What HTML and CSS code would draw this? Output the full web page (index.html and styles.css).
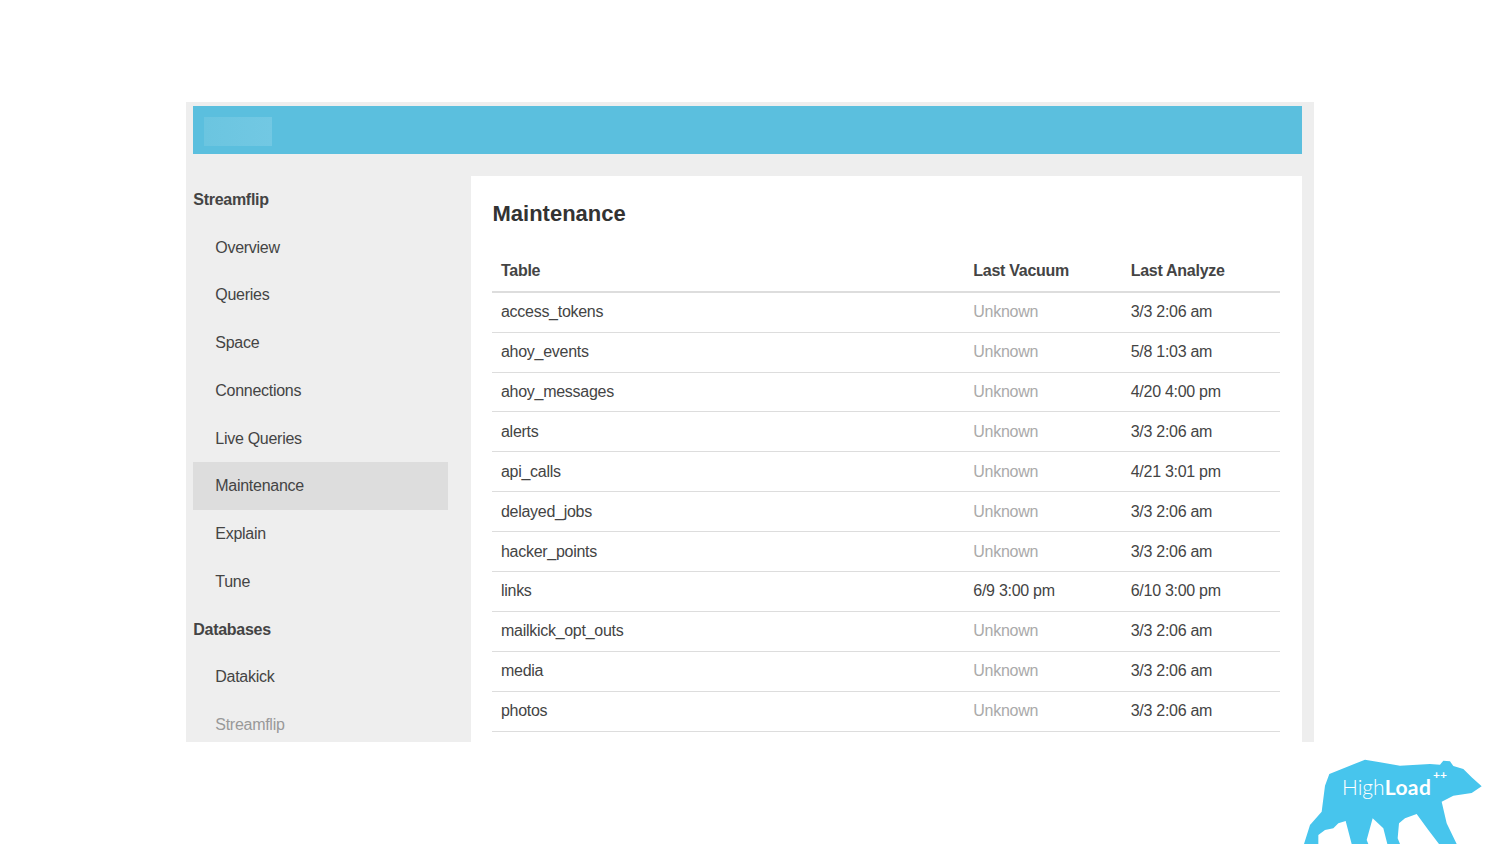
FILE: index.html
```html
<!DOCTYPE html>
<html lang="en">
<head>
<meta charset="utf-8">
<title>Maintenance</title>
<link rel="stylesheet" href="styles.css">
</head>
<body>
<div class="frame">
  <header class="topbar"><div class="brand"></div></header>
  <div class="layout">
    <nav class="sidebar">
      <div class="nav-title">Streamflip</div>
      <a class="nav-item">Overview</a>
      <a class="nav-item">Queries</a>
      <a class="nav-item">Space</a>
      <a class="nav-item">Connections</a>
      <a class="nav-item">Live Queries</a>
      <a class="nav-item active">Maintenance</a>
      <a class="nav-item">Explain</a>
      <a class="nav-item">Tune</a>
      <div class="nav-title">Databases</div>
      <a class="nav-item">Datakick</a>
      <a class="nav-item muted">Streamflip</a>
    </nav>
    <main class="content">
      <h1 class="page-title">Maintenance</h1>
      <table class="data">
        <thead>
          <tr><th class="c1">Table</th><th class="c2">Last Vacuum</th><th class="c2">Last Analyze</th></tr>
        </thead>
        <tbody>
          <tr><td>access_tokens</td><td class="muted">Unknown</td><td>3/3 2:06 am</td></tr>
          <tr><td>ahoy_events</td><td class="muted">Unknown</td><td>5/8 1:03 am</td></tr>
          <tr><td>ahoy_messages</td><td class="muted">Unknown</td><td>4/20 4:00 pm</td></tr>
          <tr><td>alerts</td><td class="muted">Unknown</td><td>3/3 2:06 am</td></tr>
          <tr><td>api_calls</td><td class="muted">Unknown</td><td>4/21 3:01 pm</td></tr>
          <tr><td>delayed_jobs</td><td class="muted">Unknown</td><td>3/3 2:06 am</td></tr>
          <tr><td>hacker_points</td><td class="muted">Unknown</td><td>3/3 2:06 am</td></tr>
          <tr><td>links</td><td>6/9 3:00 pm</td><td>6/10 3:00 pm</td></tr>
          <tr><td>mailkick_opt_outs</td><td class="muted">Unknown</td><td>3/3 2:06 am</td></tr>
          <tr><td>media</td><td class="muted">Unknown</td><td>3/3 2:06 am</td></tr>
          <tr><td>photos</td><td class="muted">Unknown</td><td>3/3 2:06 am</td></tr>
        </tbody>
      </table>
    </main>
  </div>
</div>
<div class="logo">
  <svg class="bear" width="210" height="100" viewBox="0 0 630 300" aria-hidden="true">
    <path fill="#47c5ed" d="M42 300 L60 243 L95 203 L105 125 L118 90 L225 47 L270 55 L330 65 L420 60 L450 62 L460 50 L480 52 L490 66 L520 75 L545 100 L575 127 L545 147 L490 155 L455 173 L470 238 L500 300 L447 300 L415 258 L380 210 L345 223 L327 238 L323 283 L330 300 L292 300 L280 253 L248 223 L230 288 L235 300 L185 300 L167 231 L145 238 L130 253 L105 258 L85 273 L85 300 Z"/>
  </svg>
  <span class="logo-text">High<b>Load</b><sup>++</sup></span>
</div>
</body>
</html>
```
FILE: styles.css
```css
html, body {
  margin: 0;
  padding: 0;
  background: #fff;
}
body {
  height: 844px;
  overflow: hidden;
  font-family: "Liberation Sans", Arial, sans-serif;
  font-size: 16px;
  letter-spacing: -0.28px;
  color: #444;
}
.frame {
  width: 1128px;
  height: 640px;
  margin: 102px 0 0 186px;
  padding: 4.3px 12.3px 0 7.3px;
  box-sizing: border-box;
  background: #eee;
  overflow: hidden;
}
.topbar {
  height: 47.7px;
  background: #5bbfde;
  padding: 11px 10.7px;
  box-sizing: border-box;
}
.brand {
  width: 68px;
  height: 29px;
  background: linear-gradient(90deg, #6bc5e0, #72c8e3);
}
.layout {
  display: flex;
  gap: 22.4px;
  margin-top: 22px;
}
.sidebar {
  width: 255px;
  flex: none;
}
.nav-title, .nav-item {
  display: block;
  height: 47.75px;
  line-height: 47.75px;
}
.nav-title {
  font-weight: bold;
}
.nav-item {
  padding-left: 22px;
}
.nav-item.active {
  background: #ddd;
}
.muted {
  color: #aaa;
}
.nav-item.muted {
  color: #999;
}
.content {
  flex: 1;
  background: #fff;
  padding: 23.5px 22px 22px 21.8px;
  min-height: 600px;
}
.page-title {
  margin: 0;
  font-size: 22px;
  line-height: 30px;
  font-weight: bold;
  letter-spacing: 0;
  color: #333;
}
.data {
  width: 100%;
  margin-top: 22.9px;
  border-collapse: collapse;
  table-layout: fixed;
}
.data th, .data td {
  padding: 0 8.5px;
  text-align: left;
  height: 39.9px;
  box-sizing: border-box;
  border-bottom: 1px solid #ddd;
}
.data th {
  padding-bottom: 2px;
  font-weight: bold;
  border-bottom: 2px solid #ddd;
}
.c1 { width: 60%; }
.c2 { width: 20%; }
.logo {
  position: absolute;
  left: 1290px;
  top: 744px;
  width: 210px;
  height: 100px;
}
.bear {
  display: block;
}
.logo-text {
  position: absolute;
  left: 52px;
  top: 31px;
  font-family: Lato, sans-serif;
  font-size: 21px;
  line-height: 24px;
  font-weight: 300;
  letter-spacing: 0;
  color: #fff;
  white-space: nowrap;
}
.logo-text b {
  font-weight: 700;
  letter-spacing: 0.4px;
}
.logo-text sup {
  position: absolute;
  left: 91px;
  top: -6px;
  font-size: 12px;
  line-height: 12px;
  font-weight: 700;
}
```
